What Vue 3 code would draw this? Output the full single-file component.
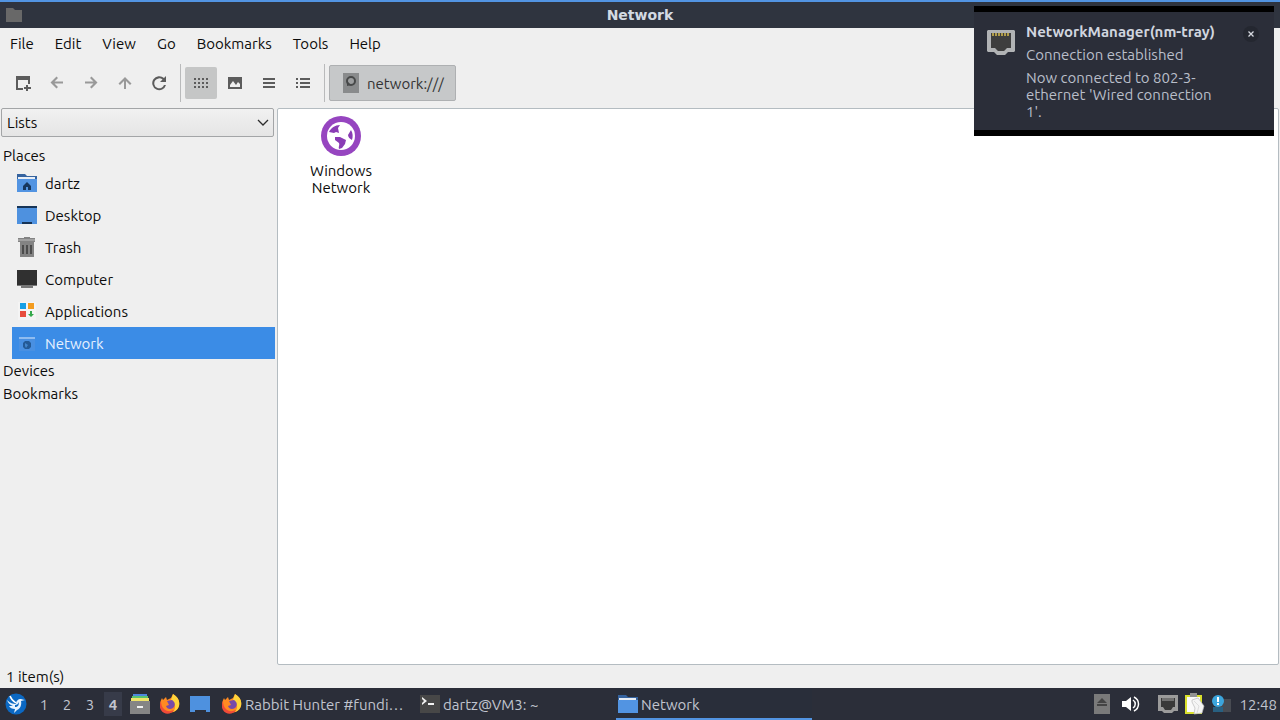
<template>
  <div class="desktop">
    <header class="titlebar">
      <svg class="title-icon" viewBox="0 0 16 14"><path d="M0 0h7l2 2h7v12H0z" fill="#686868" /></svg>
      <h1 class="title">Network</h1>
    </header>

    <nav class="menubar">
      <button v-for="menu in menus" :key="menu" class="menu">{{ menu }}</button>
    </nav>

    <div class="toolbar">
      <template v-for="(group, g) in tools" :key="g">
        <button
          v-for="tool in group"
          :key="tool.name"
          class="tool"
          :class="{ active: tool.name === viewMode, dim: tool.dim }"
          :aria-label="tool.name"
          @click="g === 1 && (viewMode = tool.name)"
        >
          <svg viewBox="0 0 16 16"><path :d="tool.d" fill="currentColor" fill-rule="evenodd" /></svg>
        </button>
        <span class="separator"></span>
      </template>
      <button class="path-button">
        <svg viewBox="0 0 16 20">
          <path d="M0 0h16v20H0z" fill="#898b8c" />
          <circle cx="8" cy="8" r="4" fill="#9b9d9e" stroke="#474949" stroke-width="2" />
          <path d="M4 8v5l4-1z" fill="#474949" />
        </svg>
        network:///
      </button>
    </div>

    <main class="main">
      <aside class="sidebar">
        <div class="combo">
          <select v-model="sideMode" aria-label="Side pane" class="combo-select">
            <option>Lists</option>
          </select>
          <svg class="combo-arrow" viewBox="0 0 12 8"><path d="M1 1l5 5 5-5" fill="none" stroke="#2c2c2c" stroke-width="1.3" /></svg>
        </div>

        <h2 class="section">Places</h2>
        <ul class="places">
          <li v-for="place in places" :key="place.name">
            <button class="place" :class="{ selected: place.name === current }" @click="current = place.name">
              <svg viewBox="0 0 20 20">
                <path v-for="(p, i) in place.icon" :key="i" :d="p[1]" :fill="p[0]" fill-rule="evenodd" />
              </svg>
              {{ place.name }}
            </button>
          </li>
        </ul>
        <h2 class="section">Devices</h2>
        <h2 class="section">Bookmarks</h2>
      </aside>

      <section class="files">
        <button class="file">
          <svg viewBox="0 0 40 40">
            <circle cx="20" cy="20" r="20" fill="#9645c0" />
            <circle cx="20" cy="20" r="14" fill="#fff" />
            <path d="M8 16c2-4 6-7 11-7l-2 3 1 5-3-1-2 1zM14 21h5l6 3-1 4-3 4-3 1c-1-2 1-4 0-6l-4-3zM27 19l3-5c2 3 2 7 1 10-2-1-4-3-4-5z" fill="#8a3cb5" />
          </svg>
          <span>Windows Network</span>
        </button>
      </section>
    </main>

    <footer class="statusbar">1 item(s)</footer>

    <div class="taskbar">
      <button class="launcher" aria-label="Application menu">
        <svg viewBox="0 0 22 22">
          <circle cx="11" cy="11" r="10.5" fill="#0b68c3" />
          <path d="M2 7c3 3 6 4 9 4 0-3 2-5 5-5 1 0 2 1 4 1l-4 1c1 4-1 8-4 9l-3 3 1-4c-3 0-5-1-6-3h4c-3-1-5-3-6-6z" fill="#e7f3ff" />
          <path d="M5 3c1 3 3 5 6 7" fill="none" stroke="#fff" stroke-width="1.5" />
          <path d="M10 12c2 0 3-1 4-3 0 3-1 5-4 5z" fill="#0b68c3" />
        </svg>
      </button>
      <div class="pager">
        <button v-for="n in 4" :key="n" class="page" :class="{ active: n === workspace }" @click="workspace = n">{{ n }}</button>
      </div>
      <div class="quick">
        <button class="launcher" aria-label="File manager">
          <svg viewBox="0 0 20 20">
            <path d="M3 0h14v5H3z" fill="#4d87dd" />
            <path d="M2 2h16v3H2z" fill="#5bc36c" />
            <path d="M1 4h18v4H1z" fill="#efe36a" />
            <path d="M0 7h20v13H0z" fill="#858585" />
            <path d="M7 12h6v2H7z" fill="#f3f3f3" />
          </svg>
        </button>
        <button class="launcher" aria-label="Firefox">
          <svg viewBox="0 0 20 20">
            <path v-for="(p, i) in firefox" :key="i" :d="p[1]" :fill="p[0]" />
          </svg>
        </button>
        <button class="launcher" aria-label="Show desktop">
          <svg viewBox="0 0 20 20"><path d="M0 2h20v16h-4v-2H5v2H0z" fill="#4e91df" /></svg>
        </button>
      </div>
      <div class="tasks">
        <button v-for="task in tasks" :key="task.label" class="task" :class="{ active: task.active }">
          <svg viewBox="0 0 20 20">
            <path v-for="(p, i) in task.icon" :key="i" :d="p[1]" :fill="p[0]" />
          </svg>
          <span>{{ task.label }}</span>
        </button>
      </div>
      <div class="tray">
        <svg class="eject" viewBox="0 0 16 20">
          <path d="M0 0h16v20H0z" fill="#7a7a7a" />
          <path d="M8 4l5 5H3zM3 10h10v2H3z" fill="#444" />
        </svg>
        <svg class="volume" viewBox="0 0 18 16">
          <path d="M0 5h4l5-4v14l-5-4H0z" fill="#fff" />
          <path d="M11 4c3 2 3 6 0 8M12 1c6 3 6 11 0 14" fill="none" stroke="#fff" stroke-width="1.5" />
        </svg>
        <svg class="ethernet" viewBox="0 0 20 18">
          <path d="M0 0h20v16h-4l-2 2H6l-2-2H0z" fill="#9b9b9b" />
          <path d="M3 3h14v9h-2l-2 3H7l-2-3H3z" fill="#393939" />
          <path d="M5 3v3M7 3v3M9 3v3M11 3v3M13 3v3M15 3v3" stroke="#aaa" />
        </svg>
        <svg class="clipboard" viewBox="0 0 20 22">
          <path d="M0 2h17v19H0z" fill="#d9e02c" />
          <path d="M2 4h13v15H2z" fill="#fafafa" />
          <path d="M5 0h7v4H5z" fill="#929292" />
          <path d="M7 7l6-2 6 8-2 7-8 1 1-6-3-6z" fill="#f5f5f5" stroke="#bbb" stroke-width=".7" />
          <path d="M9 8l5 5-2 7" fill="none" stroke="#ddd" />
        </svg>
        <svg class="notice" viewBox="0 0 20 18">
          <path d="M3 4h16v13H3z" fill="#484b52" />
          <path d="M1 12h10v5H1z" fill="#286081" />
          <circle cx="6" cy="6" r="6" fill="#3ca5dc" />
          <path d="M5 2h2v5H5zM5 8h2v2H5z" fill="#fff" />
        </svg>
        <time class="clock">12:48</time>
      </div>
    </div>

    <div v-if="showNotice" class="notification" role="status">
      <svg class="notification-icon" viewBox="0 0 28 25">
        <path d="M1 0h26l1 1v20l-1 1h-6l-3 3h-8l-3-3H1l-1-1V1z" fill="#b1b3b5" />
        <path d="M4 3h20v15h-4l-3 3h-6l-3-3H4z" fill="#3e3e3e" />
        <path d="M6 3v3M9 3v3M12 3v3M15 3v3M18 3v3M21 3v3" stroke="#d7bd50" stroke-width="1.5" />
      </svg>
      <div class="notification-text">
        <strong>NetworkManager(nm-tray)</strong>
        <p>Connection established</p>
        <p>Now connected to 802-3-ethernet 'Wired connection 1'.</p>
      </div>
      <button class="close" aria-label="Close" @click="showNotice = false">
        <svg viewBox="0 0 6 6"><path d="M.5 .5l5 5M5.5 .5l-5 5" stroke="#d5d8df" stroke-width="1.3" /></svg>
      </button>
    </div>
  </div>
</template>

<script setup>
import { ref } from 'vue'

const menus = ['File', 'Edit', 'View', 'Go', 'Bookmarks', 'Tools', 'Help']
const viewMode = ref('Icon view')
const sideMode = ref('Lists')
const current = ref('Network')
const workspace = ref(4)
const showNotice = ref(true)

const tools = [
  [
    { name: 'New window', d: 'M1 1h14v8h-2V5H3v8h5v2H1zM11 10h2v2h3v2h-3v2h-2v-2H9v-2h2z' },
    { name: 'Back', dim: true, d: 'M7.500 1.500L9 3 5.500 6.500H14v2H5.500L9 12l-1.500 1.500L1.500 7.500z' },
    { name: 'Forward', dim: true, d: 'M8.500 1.500L7 3l3.500 3.500H2v2h8.500L7 12l1.500 1.500 6-6z' },
    { name: 'Up', dim: true, d: 'M1.500 8.500L3 10l4-4v8h2V6l4 4 1.500-1.500L8 2z' },
    { name: 'Reload', d: 'M13 3l2-2v6H9l2.500-2.500A5 5 0 1 0 13 10h2A7 7 0 1 1 13 3z' }
  ],
  [
    { name: 'Icon view', d: dotGrid() },
    { name: 'Thumbnail view', d: 'M1 2h14v12H1zM3 12h10V9l-2-2-2 3-3-4-3 4z' },
    { name: 'Compact view', d: 'M2 3h12v2H2zM2 7h12v2H2zM2 11h12v2H2z' },
    { name: 'Detailed list', d: 'M1 3h2v2H1zM5 3h10v2H5zM1 7h2v2H1zM5 7h10v2H5zM1 11h2v2H1zM5 11h10v2H5z' }
  ]
]

// Each icon is a list of [fill, path] layers
const folder = [
  ['#35639f', 'M0 1h8l2 2h10v5H0z'],
  ['#e8eef6', 'M1 4h17v3H1z'],
  ['#5294e2', 'M0 6h20v13H0z']
]

const firefox = [
  ['#ff8a22', 'M2 4l1 2 3-3 1 3 4-2 2-4c5 3 7 7 6 12-2 8-14 9-18 2-2-4 0-8 1-10z'],
  ['#ffd43b', 'M13 0c5 3 7 7 6 12-1 3-3 5-6 6 4-5 2-9-2-12z'],
  ['#f04b38', 'M1 7c0 9 7 12 13 9-3 5-10 5-13 0-2-3-1-7 0-9z'],
  ['#774ba9', 'M7 7l5-1c3 2 4 5 1 8-3 2-6 1-7-2l3-1z']
]

const places = [
  { name: 'dartz', icon: [...folder, ['#17375e', 'M10 9l4 4v4h-3v-3H9v3H6v-4z']] },
  { name: 'Desktop', icon: [['#4e91df', 'M0 1h20v18H0z'], ['#173456', 'M0 1h20v2H0zM5 17h10v2H5z']] },
  { name: 'Trash', icon: [['#838383', 'M7 0h6v1h5v4h-1v15H3V5H1V1h6z'], ['#a0a0a0', 'M1 2h17v2H1z'], ['#4c4c4c', 'M5 8h2v9H5zM9 8h2v9H9zM13 8h2v9h-2z']] },
  { name: 'Computer', icon: [['#303030', 'M0 1h20v15H0z'], ['#777', 'M0 16h20v1H0zM4 17h12v2H4z']] },
  { name: 'Applications', icon: [['#f4f4f4', 'M1 1h18v18H1z'], ['#169fe6', 'M3 2h6v6H3z'], ['#f39c1f', 'M11 2h6v6h-6z'], ['#e84d3d', 'M3 10h6v6H3z'], ['#35a94c', 'M13 10h2v3h2l-3 3-3-3h2z']] },
  { name: 'Network', icon: [['#4990e2', 'M2 6h16v12H2z'], ['#8fbcf0', 'M2 4h16v2H2z'], ['#245a96', 'M8 8h4l2 2v4l-2 2H8l-2-2v-4z'], ['#4386cc', 'M8 10l3 2-2 3-1-2z']] }
]

const tasks = [
  { label: 'Rabbit Hunter #fundi…', icon: firefox },
  { label: 'dartz@VM3: ~', icon: [['#474747', 'M0 1h20v18H0z'], ['#f2f2f2', 'M2 3l5 4-5 4V9l2-2-2-2zM8 9h6v2H8z']] },
  { label: 'Network', icon: folder, active: true }
]

function dotGrid() {
  let d = ''
  for (const y of [3, 7, 11]) {
    for (const x of [1, 5, 9, 13]) d += `M${x} ${y}h2v2h-2z`
  }
  return d
}
</script>

<style>
body {
  margin: 0;
}
</style>

<style scoped>
.desktop {
  position: relative;
  display: flex;
  flex-direction: column;
  min-height: 100vh;
  background: #efefef;
  color: #0c0c0c;
  font-family: Ubuntu, "Noto Sans", sans-serif;
  font-size: 15px;
  line-height: 17px;
}

button {
  padding: 0;
  border: 0;
  background: none;
  color: inherit;
  font: inherit;
}

svg {
  display: block;
  flex-shrink: 0;
}

.titlebar {
  display: flex;
  align-items: center;
  box-sizing: border-box;
  height: 28px;
  padding: 0 6px;
  border-top: 2px solid #5294e2;
  background: #2f343f;
}

.title-icon {
  width: 16px;
  height: 14px;
}

.title {
  flex: 1;
  margin: 0 16px 0 0;
  color: #d3dae3;
  font: bold 14px/18px "DejaVu Sans", sans-serif;
  text-align: center;
}

.menubar {
  display: flex;
  gap: 1px;
  height: 30px;
}

.menu {
  padding: 0 10px;
}

.toolbar {
  display: flex;
  align-items: center;
  gap: 2px;
  height: 50px;
  padding: 0 7px;
}

.tool {
  display: grid;
  place-items: center;
  width: 32px;
  height: 32px;
  border-radius: 2px;
  color: #5c5c5c;
}

.tool svg {
  width: 16px;
  height: 16px;
}

.tool.dim {
  color: #999;
}

.tool.active {
  background: #c5c6c6;
}

.separator {
  width: 1px;
  height: 38px;
  margin: 0 2px 0 3px;
  background: #b9babb;
}

.path-button {
  display: flex;
  align-items: center;
  gap: 8px;
  height: 36px;
  padding: 0 11px 0 13px;
  border: 1px solid #aeb0b2;
  border-radius: 2px;
  background: #c6c8c9;
  color: #333;
}

.path-button svg {
  width: 16px;
  height: 20px;
}

.main {
  display: flex;
  flex: 1;
}

.sidebar {
  width: 277px;
}

.combo {
  position: relative;
  margin: 0 3px 7px 1px;
}

.combo-select {
  display: block;
  appearance: none;
  width: 100%;
  height: 29px;
  padding: 0 5px;
  border: 1px solid #a3a5a7;
  border-radius: 2px;
  background: linear-gradient(#f1f1f1, #e5e5e5);
  color: inherit;
  font: inherit;
}

.combo-arrow {
  position: absolute;
  top: 11px;
  right: 5px;
  width: 12px;
  height: 8px;
  pointer-events: none;
}

.section {
  margin: 0;
  padding-left: 3px;
  font-size: 15px;
  font-weight: normal;
  line-height: 23px;
}

.places {
  margin: 0 2px 0 12px;
  padding: 0;
  list-style: none;
}

.place {
  display: flex;
  align-items: center;
  gap: 8px;
  width: 100%;
  height: 32px;
  padding-left: 5px;
}

.place svg {
  width: 20px;
  height: 20px;
}

.place.selected {
  background: #3b8ce6;
  color: #e6f1ff;
}

.files {
  flex: 1;
  margin-right: 1px;
  padding: 7px 16px;
  border: 1px solid #b4bcc1;
  border-radius: 2px;
  background: #fff;
}

.file {
  display: flex;
  flex-direction: column;
  align-items: center;
  gap: 6px;
  width: 94px;
}

.file span {
  width: 80px;
}

.file svg {
  width: 40px;
  height: 40px;
}

.statusbar {
  padding: 1px 6px 0;
  line-height: 22px;
}

.taskbar {
  display: flex;
  align-items: center;
  height: 32px;
  padding: 0 3px 0 5px;
  background: #2b2e39;
  color: #c1c5cf;
}

.launcher svg {
  width: 22px;
  height: 22px;
}

.pager {
  display: flex;
  gap: 5px;
  margin: 0 8px;
}

.page {
  width: 18px;
  height: 24px;
}

.page.active {
  background: #373b49;
  font-weight: bold;
}

.quick {
  display: flex;
  gap: 10px;
}

.quick svg {
  width: 20px;
  height: 20px;
}

.tasks {
  display: flex;
  flex: 1;
  gap: 2px;
  min-width: 0;
  margin-left: 10px;
}

.task {
  display: flex;
  align-items: center;
  gap: 3px;
  flex: 0 1 196px;
  min-width: 0;
  height: 32px;
  padding: 2px 4px 0 2px;
  box-sizing: border-box;
  border-bottom: 2px solid transparent;
}

.task svg {
  width: 20px;
  height: 20px;
}

.task span {
  overflow: hidden;
  text-overflow: ellipsis;
  white-space: nowrap;
}

.task.active {
  border-color: #5294e2;
  background: #292e3a;
}

.tray {
  display: flex;
  align-items: center;
  gap: 7px;
}

.eject {
  width: 16px;
  height: 20px;
}

.volume {
  width: 18px;
  height: 16px;
  margin: 0 11px 0 5px;
}

.ethernet {
  width: 20px;
  height: 18px;
}

.clipboard {
  width: 20px;
  height: 22px;
}

.notice {
  width: 20px;
  height: 18px;
}

.notification {
  position: absolute;
  top: 6px;
  right: 6px;
  display: flex;
  gap: 11px;
  box-sizing: border-box;
  width: 300px;
  padding: 11px 15px 10px 13px;
  border: solid #000;
  border-width: 6px 0;
  background: #2b2e39;
  color: #b9bec9;
}

.notification-icon {
  width: 28px;
  height: 25px;
  margin-top: 7px;
}

.notification-text {
  flex: 1;
  padding-right: 12px;
}

.notification-text strong {
  color: #d0d5df;
}

.notification-text p {
  margin: 6px 0 0;
}

.close {
  display: grid;
  place-items: center;
  width: 16px;
  height: 16px;
  margin-top: 3px;
  border-radius: 50%;
  background: #242730;
}

.close svg {
  width: 6px;
  height: 6px;
}
</style>
